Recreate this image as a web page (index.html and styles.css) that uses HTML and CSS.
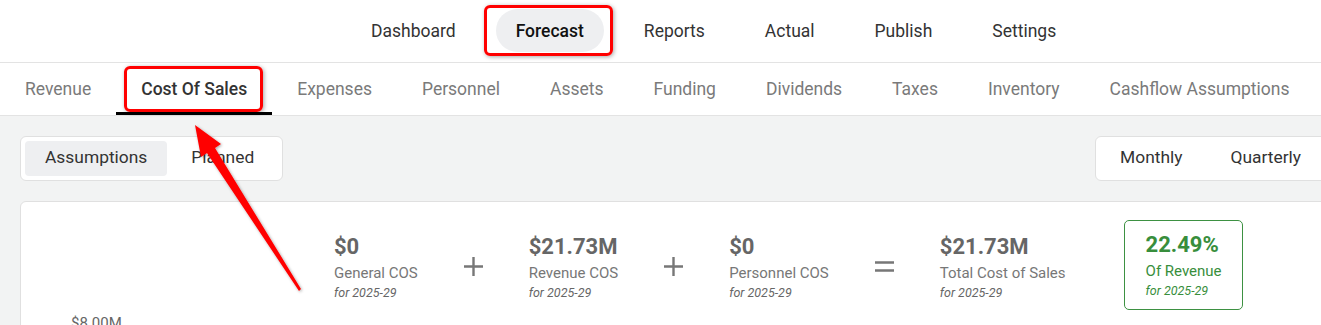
FILE: index.html
```html
<!DOCTYPE html>
<html lang="en">
<head>
    <meta charset="UTF-8">
    <meta name="viewport" content="width=device-width, initial-scale=1.0">
    <title>Forecast - Cost Of Sales</title>
    <link rel="stylesheet" href="styles.css">
</head>
<body>
    <header class="top-nav">
        <a class="top-link">Dashboard</a>
        <a class="top-link active">Forecast</a>
        <a class="top-link">Reports</a>
        <a class="top-link">Actual</a>
        <a class="top-link">Publish</a>
        <a class="top-link">Settings</a>
    </header>

    <nav class="sub-nav">
        <a class="sub-link">Revenue</a>
        <a class="sub-link active">Cost Of Sales</a>
        <a class="sub-link">Expenses</a>
        <a class="sub-link">Personnel</a>
        <a class="sub-link">Assets</a>
        <a class="sub-link">Funding</a>
        <a class="sub-link">Dividends</a>
        <a class="sub-link">Taxes</a>
        <a class="sub-link">Inventory</a>
        <a class="sub-link">Cashflow Assumptions</a>
    </nav>

    <main class="content">
        <div class="toolbar">
            <div class="toggle">
                <button class="toggle-btn first active">Assumptions</button>
                <button class="toggle-btn">Planned</button>
            </div>
            <div class="toggle period">
                <button class="toggle-btn">Monthly</button>
                <button class="toggle-btn">Quarterly</button>
                <button class="toggle-btn">Yearly</button>
            </div>
        </div>

        <section class="card">
            <div class="summary">
                <div class="stat">
                    <div class="stat-value">$0</div>
                    <div class="stat-label">General COS</div>
                    <div class="stat-sub">for 2025-29</div>
                </div>
                <svg class="op" width="19" height="19" viewBox="0 0 19 19">
                    <path d="M9.5 0v19M0 9.5h19" stroke="#777" stroke-width="2.4"/>
                </svg>
                <div class="stat">
                    <div class="stat-value">$21.73M</div>
                    <div class="stat-label">Revenue COS</div>
                    <div class="stat-sub">for 2025-29</div>
                </div>
                <svg class="op" width="19" height="19" viewBox="0 0 19 19">
                    <path d="M9.5 0v19M0 9.5h19" stroke="#777" stroke-width="2.4"/>
                </svg>
                <div class="stat">
                    <div class="stat-value">$0</div>
                    <div class="stat-label">Personnel COS</div>
                    <div class="stat-sub">for 2025-29</div>
                </div>
                <svg class="op" width="19" height="19" viewBox="0 0 19 19">
                    <path d="M0 5.5h19M0 13.5h19" stroke="#777" stroke-width="2.4"/>
                </svg>
                <div class="stat">
                    <div class="stat-value">$21.73M</div>
                    <div class="stat-label">Total Cost of Sales</div>
                    <div class="stat-sub">for 2025-29</div>
                </div>
                <div class="stat ratio">
                    <div class="stat-value">22.49%</div>
                    <div class="stat-label">Of Revenue</div>
                    <div class="stat-sub">for 2025-29</div>
                </div>
            </div>
            <div class="chart">
                <span class="axis-label">$8.00M</span>
            </div>
        </section>
    </main>

    <!-- screenshot annotations -->
    <div class="mark mark-forecast"></div>
    <div class="mark mark-cos"></div>
    <svg class="arrow" width="1321" height="325" viewBox="0 0 1321 325">
        <defs>
            <filter id="shade" x="-20%" y="-20%" width="140%" height="140%">
                <feDropShadow dx="1" dy="1" stdDeviation="1.5" flood-color="#000" flood-opacity="0.35"/>
            </filter>
        </defs>
        <polygon filter="url(#shade)" fill="#ff0000"
            points="195,125 221,144 215,148 301,289 299,291 207,153 201,157"/>
    </svg>
</body>
</html>
```

FILE: styles.css
```css
body {
    margin: 0;
    font-family: Roboto, "Liberation Sans", Arial, sans-serif;
    background: #f2f3f3;
    overflow: hidden;
    width: 1321px;
    height: 325px;
    position: relative;
}
a {
    cursor: pointer;
}
button {
    font-family: inherit;
    border: none;
    background: none;
    cursor: pointer;
}

/* top navigation */
.top-nav {
    display: flex;
    gap: 20px;
    height: 63px;
    box-sizing: border-box;
    padding: 9px 0 10px 351px;
    background: white;
    border-bottom: 1px solid #e3e3e3;
}
.top-link {
    display: flex;
    align-items: center;
    padding: 0 20px;
    height: 43px;
    border-radius: 22px;
    font-size: 17.5px;
    color: #333;
}
.top-link.active {
    background: #eeeff1;
    color: #111;
    font-weight: 500;
}

/* section tabs */
.sub-nav {
    display: flex;
    height: 53px;
    box-sizing: border-box;
    background: white;
    border-bottom: 1px solid #e3e3e3;
}
.sub-link {
    display: flex;
    align-items: center;
    padding: 0 25px;
    height: 52px;
    box-sizing: border-box;
    border-bottom: 3px solid transparent;
    padding-top: 3px;
    font-size: 17.5px;
    color: #7a7a7a;
    white-space: nowrap;
}
.sub-link.active {
    color: #333;
    font-weight: 500;
    border-bottom-color: #000;
}

/* content */
.content {
    width: 1421px;
    box-sizing: border-box;
    padding: 20px 0 0 20px;
}
.toolbar {
    display: flex;
    align-items: center;
}
.toggle {
    display: flex;
    padding: 4px;
    background: white;
    border: 1px solid #e0e0e0;
    border-radius: 6px;
}
.toggle.period {
    margin-left: auto;
    padding: 4px 0;
}
.toggle-btn {
    height: 35px;
    padding: 0 24px 3px;
    border-radius: 4px;
    font-size: 17.4px;
    color: #333;
}
.toggle-btn.first {
    padding: 0 20px 3px;
}
.toggle-btn.active {
    background: #eeeff1;
}

.card {
    margin-top: 20px;
    height: 200px;
    background: white;
    border: 1px solid #e0e0e0;
    border-radius: 6px;
}
.summary {
    display: flex;
    align-items: center;
    gap: 46px;
    padding: 18px 0 0 313px;
}
.op {
    flex-shrink: 0;
    margin-top: 2px;
}
.stat {
    margin-top: 4px;
}
.stat-value {
    font-size: 22px;
    line-height: 28px;
    font-weight: 700;
    color: #666;
    margin-bottom: 2px;
}
.stat-label {
    font-size: 15px;
    line-height: 21px;
    color: #777;
}
.stat-sub {
    margin-top: 1px;
    font-size: 12.5px;
    line-height: 16px;
    font-style: italic;
    color: #666;
}
.stat.ratio {
    margin-top: 0;
    margin-left: 12px;
    padding: 10px 20px 10px 21px;
    border: 1px solid #3d9142;
    border-radius: 5px;
}
.stat.ratio .stat-value,
.stat.ratio .stat-label,
.stat.ratio .stat-sub {
    color: #388e3c;
}
.chart {
    padding: 3px 0 0 50px;
}
.axis-label {
    font-size: 15px;
    color: #666;
}

/* annotation marks */
.mark {
    position: absolute;
    border: 3px solid #ff0000;
    border-radius: 6px;
    box-shadow: 1px 1px 4px rgba(0, 0, 0, 0.35);
}
.mark-forecast {
    left: 484px;
    top: 5px;
    width: 123px;
    height: 45px;
}
.mark-cos {
    left: 124px;
    top: 66px;
    width: 133px;
    height: 40px;
}
.arrow {
    position: absolute;
    left: 0;
    top: 0;
    pointer-events: none;
}
```
